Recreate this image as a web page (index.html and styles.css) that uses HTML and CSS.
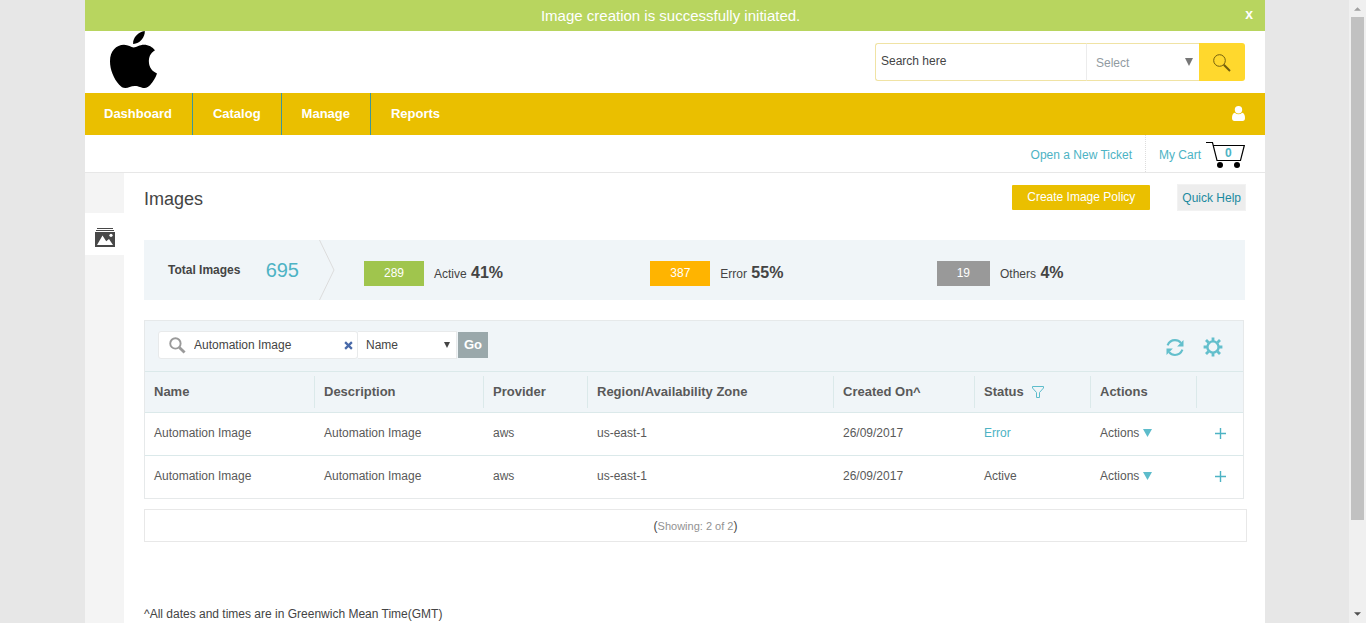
FILE: index.html
```html
<!DOCTYPE html>
<html lang="en">
<head>
<meta charset="utf-8">
<title>Images</title>
<link rel="stylesheet" href="styles.css">
</head>
<body>
<div class="viewport">
  <div class="page">
    <div class="alert" role="status">
      <p class="alert-text">Image creation is successfully initiated.</p>
      <button class="alert-close" type="button" aria-label="Close">x</button>
    </div>

    <header class="header">
      <svg class="logo" viewBox="0 0 47 57" role="img" aria-label="Apple">
        <path d="M34.8 0C35.2 6.200 29.500 13.100 23.100 12.900C22.600 6.700 28.300 .8 34.800 0Z"/>
        <path d="M23.600 16.400C27 16.400 29.400 13.700 34 13.700C38.500 13.700 42.700 16 45 19.300C40 22.300 38.700 26.700 38.900 31C39.100 36.400 42.300 40.500 47 42.400C45.500 46.800 43.200 50.500 40.400 53.700C38.800 55.600 36.800 56.900 34.400 56.900C31 56.900 29.200 54.900 24.900 54.900C20.600 54.900 18.600 57 15.300 57C12.800 57 11 55.700 9.200 53.700C3.700 47.500 0 38.700 0 30.200C0 20.100 6.200 13.800 14 13.800C18.300 13.800 21.200 16.400 23.600 16.400Z"/>
      </svg>
      <form class="search">
        <input class="search-input" type="text" value="Search here" aria-label="Search">
        <span class="search-scope">
          <select class="search-select" aria-label="Search in"><option>Select</option></select>
          <svg class="scope-arrow" viewBox="0 0 8 8" aria-hidden="true"><path d="M0 0H8L4 8Z"/></svg>
        </span>
        <button class="search-button" type="submit" aria-label="Search">
          <svg class="search-icon" viewBox="0 0 18 18" aria-hidden="true"><circle cx="6.500" cy="6.500" r="5.800"/><path d="M10.800 10.800L17 17" class="handle"/></svg>
        </button>
      </form>
    </header>

    <nav class="nav">
      <a class="nav-link" href="#">Dashboard</a>
      <a class="nav-link" href="#">Catalog</a>
      <a class="nav-link" href="#">Manage</a>
      <a class="nav-link" href="#">Reports</a>
      <button class="user" type="button" aria-label="Account">
        <svg class="user-icon" viewBox="0 0 13 15" aria-hidden="true"><circle cx="6.500" cy="3.700" r="3.700"/><path d="M2.800 6.800Q6.500 9.800 10.200 6.800Q13 7.500 13 12Q13 15 10.500 15H2.500Q0 15 0 12Q0 7.500 2.800 6.800Z"/></svg>
      </button>
    </nav>

    <div class="subbar">
      <a class="subbar-link ticket" href="#">Open a New Ticket</a>
      <a class="subbar-link cart" href="#">My Cart
        <span class="cart-box">
          <svg class="cart-icon" viewBox="0 0 39 27" aria-hidden="true"><path d="M0 1.500H6.500L11 19.500H34.500L38.300 4.500H7.500" fill="none" stroke="#000" stroke-width="1.200"/><circle cx="14" cy="24" r="3"/><circle cx="31" cy="24" r="3"/></svg>
          <span class="cart-count">0</span>
        </span>
      </a>
    </div>

    <div class="body">
      <aside class="sidebar">
        <a class="side-link" href="#" aria-label="Images">
          <svg class="side-icon" viewBox="0 0 20 19" aria-hidden="true"><path d="M2 0H18V1H2ZM1 2H19V3H1ZM0 4H20V19H0Z" fill="#484848"/><path d="M2 17L7.500 7.500L11.200 13.200L14 11L18 17Z" fill="#fff"/><circle cx="16" cy="7.300" r="1.600" fill="#fff"/></svg>
        </a>
      </aside>

      <main class="main">
        <div class="title-row">
          <h1 class="title">Images</h1>
          <button class="create" type="button">Create Image Policy</button>
          <button class="help" type="button">Quick Help</button>
        </div>

        <section class="stats" aria-label="Summary">
          <div class="total">
            <span class="total-label">Total Images</span>
            <span class="total-value">695</span>
          </div>
          <svg class="chevron" viewBox="0 0 16 60" aria-hidden="true"><path d="M.5 0L15 30L.5 60"/></svg>
          <div class="stat-list">
            <div class="stat"><span class="badge active">289</span><span class="stat-label">Active <b>41%</b></span></div>
            <div class="stat"><span class="badge error">387</span><span class="stat-label">Error <b>55%</b></span></div>
            <div class="stat"><span class="badge others">19</span><span class="stat-label">Others <b>4%</b></span></div>
          </div>
        </section>

        <section class="panel">
          <form class="filter">
            <span class="filter-box">
              <svg class="filter-icon" viewBox="0 0 18 18" aria-hidden="true"><circle cx="6.800" cy="6.800" r="5.500"/><path d="M11 11L16.500 16.500" class="handle"/></svg>
              <input class="filter-input" type="text" value="Automation Image" aria-label="Filter images">
              <button class="clear" type="button" aria-label="Clear filter"><svg class="clear-icon" viewBox="0 0 8 8" aria-hidden="true"><path d="M1 1L7 7M7 1L1 7"/></svg></button>
            </span>
            <span class="filter-scope">
              <select class="filter-select" aria-label="Filter by"><option>Name</option></select>
              <svg class="filter-arrow" viewBox="0 0 6 6" aria-hidden="true"><path d="M0 0H6L3 6Z"/></svg>
            </span>
            <button class="go" type="submit">Go</button>
            <button class="tool first" type="button" aria-label="Refresh">
              <svg class="refresh-icon" viewBox="0 0 16 16" aria-hidden="true"><path d="M1 6Q3 1 8 1Q11.500 1 13.500 3.600M15 10Q13 15 8 15Q4.500 15 2.500 12.400" fill="none" stroke="#63bfcc" stroke-width="2"/><path d="M16 1V7H10ZM0 15V9H6Z" fill="#63bfcc"/></svg>
            </button>
            <button class="tool" type="button" aria-label="Settings">
              <svg class="gear-icon" viewBox="-10 -10 20 20" aria-hidden="true"><circle r="5.600" fill="none" stroke="#63bfcc" stroke-width="2.400"/><path d="M0-6V-9.400M0 6V9.400M-6 0H-9.400M6 0H9.400M-4.500-4.500L-7-7M4.500-4.500L7-7M-4.500 4.500L-7 7M4.500 4.500L7 7" stroke="#63bfcc" stroke-width="2.800"/></svg>
            </button>
          </form>

          <table class="table">
            <colgroup><col class="c-name"><col class="c-desc"><col class="c-prov"><col class="c-region"><col class="c-date"><col class="c-status"><col class="c-actions"><col class="c-more"></colgroup>
            <thead>
              <tr>
                <th><div class="th">Name</div></th>
                <th><div class="th">Description</div></th>
                <th><div class="th">Provider</div></th>
                <th><div class="th">Region/Availability Zone</div></th>
                <th><div class="th">Created On^</div></th>
                <th><div class="th">Status <button class="funnel" type="button" aria-label="Filter status"><svg class="funnel-icon" viewBox="0 0 12 12" aria-hidden="true"><path d="M.5 .5H11.500V2L7.500 6.500V11.500H4.500V6.500L.5 2Z"/></svg></button></div></th>
                <th><div class="th">Actions</div></th>
                <th><div class="th"></div></th>
              </tr>
            </thead>
            <tbody>
              <tr>
                <td>Automation Image</td><td>Automation Image</td><td>aws</td><td>us-east-1</td><td>26/09/2017</td>
                <td><a class="status-link" href="#">Error</a></td>
                <td><button class="actions" type="button">Actions <svg class="actions-arrow" viewBox="0 0 8 7" aria-hidden="true"><path d="M0 0H8L4 7Z"/></svg></button></td>
                <td><button class="more" type="button" aria-label="Expand"><svg class="more-icon" viewBox="0 0 11 11" aria-hidden="true"><path d="M5.500 0V11M0 5.500H11"/></svg></button></td>
              </tr>
              <tr>
                <td>Automation Image</td><td>Automation Image</td><td>aws</td><td>us-east-1</td><td>26/09/2017</td>
                <td>Active</td>
                <td><button class="actions" type="button">Actions <svg class="actions-arrow" viewBox="0 0 8 7" aria-hidden="true"><path d="M0 0H8L4 7Z"/></svg></button></td>
                <td><button class="more" type="button" aria-label="Expand"><svg class="more-icon" viewBox="0 0 11 11" aria-hidden="true"><path d="M5.500 0V11M0 5.500H11"/></svg></button></td>
              </tr>
            </tbody>
          </table>
        </section>

        <div class="pager">(<span class="pager-text">Showing: 2 of 2</span>)</div>
        <p class="note">^All dates and times are in Greenwich Mean Time(GMT)</p>
      </main>
    </div>
  </div>
  <div class="scrollbar" aria-hidden="true">
    <svg class="scroll-arrow up" viewBox="0 0 8 4"><path d="M0 4L4 0L8 4Z"/></svg>
    <div class="scroll-thumb"></div>
    <svg class="scroll-arrow down" viewBox="0 0 8 4"><path d="M0 0L4 4L8 0Z"/></svg>
  </div>
</div>
</body>
</html>
```

FILE: styles.css
```css
* { box-sizing: border-box; }
body {
  margin: 0;
  font-family: "Liberation Sans", Arial, sans-serif;
  font-size: 12px;
  line-height: 16px;
  color: #444;
  background: #e7e7e7;
}
button, input, select { font: inherit; color: inherit; margin: 0; }
button { border: 0; padding: 0; background: none; cursor: pointer; }
a { color: inherit; text-decoration: none; }
svg { display: block; flex: none; }

.viewport { display: flex; height: 100vh; padding-left: 85px; overflow: hidden; }
.page { flex: 1; display: flex; flex-direction: column; background: #fff; }

.alert { display: flex; align-items: center; height: 31px; flex: none; padding: 0 12px 0 11px; background: #b8d55f; color: #fff; }
.alert-text { flex: 1; margin: 0; font-size: 15px; text-align: center; }
.alert-close { font-size: 14px; font-weight: bold; line-height: 16px; padding: 0 0 3px; }

.header { display: flex; justify-content: space-between; align-items: flex-start; height: 62px; flex: none; padding: 0 20px 0 25px; }
.logo { width: 47px; height: 57px; }
.search { display: flex; width: 370px; height: 38px; margin-top: 12px; }
.search-input { flex: 1; min-width: 0; border: 1px solid #f0e3a4; border-right: 0; border-radius: 3px 0 0 3px; padding: 0 5px 2px; outline: 0; }
.search-scope { position: relative; width: 113px; }
.search-select { appearance: none; width: 100%; height: 100%; background: #fff; border: 1px solid #f0e3a4; border-left-color: #ececec; border-right: 0; border-radius: 0; padding: 1px 9px 0; color: #919ba1; }
.scope-arrow { position: absolute; right: 6px; top: 15px; width: 8px; height: 8px; fill: #777; pointer-events: none; }
.search-button { display: flex; align-items: center; justify-content: center; width: 46px; padding-top: 2px; background: #ffd82d; border-radius: 0 3px 3px 0; }
.search-icon { width: 18px; height: 18px; fill: none; stroke: #735f0d; stroke-width: 1; }
.search-icon .handle { stroke-width: 2; }

.nav { display: flex; height: 42px; flex: none; background: #eabf00; color: #fff; font-size: 13px; font-weight: bold; }
.nav-link { display: flex; align-items: center; padding: 0 20px; border-right: 1px solid #3d969a; }
.nav-link:first-child { padding-left: 19px; }
.nav-link:nth-child(4) { border-right: 0; }
.user { margin-left: auto; padding: 0 20px 2px; }
.user-icon { width: 13px; height: 15px; fill: #fff; }

.subbar { display: flex; justify-content: flex-end; height: 38px; flex: none; padding-right: 20px; border-bottom: 1px solid #e7e7e7; color: #4db3c4; }
.subbar-link { display: flex; align-items: center; padding-top: 2px; }
.ticket { padding-right: 13px; border-right: 1px dotted #ddd; }
.cart { gap: 5px; padding-left: 13px; }
.cart-box { position: relative; }
.cart-icon { width: 39px; height: 27px; }
.cart-count { position: absolute; left: 19px; top: 4px; font-weight: bold; }

.body { flex: 1; display: flex; }
.sidebar { width: 39px; flex: none; padding-top: 40px; background: #f4f4f4; }
.side-link { display: flex; align-items: center; padding: 6px 10px 0; height: 42px; background: #fff; }
.side-icon { width: 20px; height: 19px; }
.main { flex: 1; padding: 11px 18px 0 20px; }

.title-row { display: flex; align-items: flex-start; height: 28px; padding-right: 1px; }
.title { flex: 1; margin: 0; font-size: 18px; font-weight: normal; line-height: 30px; }
.create { height: 25px; margin-top: 1px; padding: 0 15px 2px; background: #eabf00; color: #fff; border-radius: 1px; }
.help { height: 27px; margin-left: 27px; padding: 0 4px; border: 1px solid #f2f2f2; background: #ededed; color: #1b8aa0; }

.stats { display: flex; height: 60px; margin: 28px 2px 0 0; background: #f0f5f8; }
.total { display: flex; align-items: center; justify-content: space-between; width: 175px; padding: 0 20px 0 24px; }
.total-label { font-weight: bold; }
.total-value { font-size: 20px; line-height: 24px; color: #4db3c4; }
.chevron { width: 16px; height: 60px; fill: none; stroke: #dcdcdc; }
.stat-list { flex: 1; display: grid; grid-template-columns: repeat(3, 1fr); margin: 6px 22px 0 29px; }
.stat { display: flex; align-items: center; gap: 10px; }
.stat-label b { font-size: 16px; margin-left: 1px; }
.badge { padding: 0 20px; line-height: 25px; color: #fff; }
.badge.active { background: #a0c54d; }
.badge.error { background: #ffb400; }
.badge.others { background: #999; }

.panel { margin: 20px 3px 0 0; border: 1px solid #e6e9ea; background: #f0f5f8; }
.filter { display: flex; align-items: center; height: 51px; padding: 0 20px 2px 13px; border-bottom: 1px solid #dbe9ea; }
.filter-box, .filter-scope { display: flex; align-items: center; height: 28px; border: 1px solid #e8eaeb; background: #fff; }
.filter-box { width: 200px; border-radius: 3px; padding: 0 4px 0 10px; }
.filter-icon { width: 17px; height: 17px; fill: none; stroke: #9a9a9a; stroke-width: 2; }
.filter-icon .handle { stroke-width: 3; }
.filter-input { flex: 1; min-width: 0; border: 0; padding: 0 8px; outline: 0; }
.clear-icon { width: 9px; height: 9px; fill: none; stroke: #4869a8; stroke-width: 2; }
.filter-scope { position: relative; width: 99px; border-left: 0; }
.filter-select { appearance: none; width: 100%; height: 100%; border: 0; background: none; padding: 0 8px; }
.filter-arrow { position: absolute; right: 6px; top: 10px; width: 6px; height: 6px; fill: #444; pointer-events: none; }
.go { width: 30px; height: 26px; margin-left: 1px; background: #9aa8ab; color: #fff; font-size: 13px; font-weight: bold; }
.tool { margin: 4px 0 0 19px; }
.tool.first { margin-left: auto; }
.refresh-icon { width: 18px; height: 17px; }
.gear-icon { width: 20px; height: 20px; }

.table { width: 100%; table-layout: fixed; border-collapse: separate; border-spacing: 0; color: #595959; }
.c-name { width: 170px; }
.c-desc { width: 169px; }
.c-prov { width: 104px; }
.c-region { width: 246px; }
.c-date { width: 141px; }
.c-status { width: 116px; }
.c-actions { width: 106px; }
.c-more { width: 46px; }
.table th { height: 41px; padding: 0; border-bottom: 1px solid #dbe9ea; font-size: 13px; text-align: left; }
.th { display: flex; align-items: center; gap: 8px; height: 32px; padding: 0 9px; border-right: 1px solid #dbe9ea; }
.table th:last-child .th { border-right: 0; }
.table td { height: 43px; padding: 0 9px 2px; background: #fff; border-bottom: 1px solid #dbe9ea; }
.table tbody tr:last-child td { border-bottom: 0; height: 42px; }
.funnel-icon { width: 12px; height: 12px; fill: none; stroke: #5dbccb; }
.status-link { color: #4db3c4; }
.actions { display: flex; align-items: center; gap: 4px; }
.actions-arrow { width: 9px; height: 8px; fill: #5dbccb; }
.more { display: block; margin-left: 9px; }
.more-icon { width: 11px; height: 11px; stroke: #4db3c4; stroke-width: 1.4; }

.pager { height: 33px; margin-top: 10px; border: 1px solid #e8e8e8; text-align: center; line-height: 32px; }
.pager-text { font-size: 11px; color: #929292; }
.note { margin: 64px 0 0; }

.scrollbar { display: flex; flex-direction: column; align-items: center; width: 17px; margin-left: 84px; background: #f0f0f0; }
.scroll-arrow { width: 7px; height: 4px; }
.up { margin: 7px 0 6px; fill: #a0a0a0; }
.down { margin: 92px 0 7px; fill: #505050; }
.scroll-thumb { flex: 1; width: 13px; background: #c1c1c1; }
```
